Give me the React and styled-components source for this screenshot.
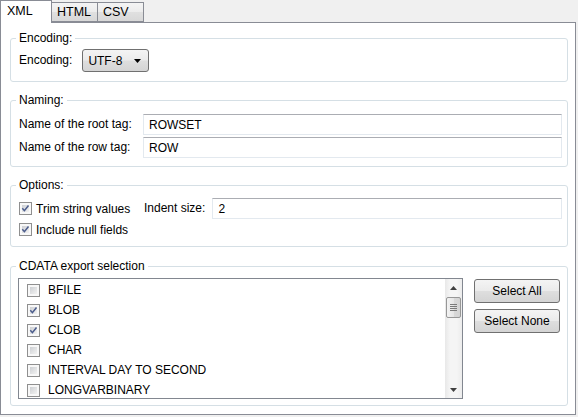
import React from 'react';
import styled, { createGlobalStyle } from 'styled-components';

const GlobalStyle = createGlobalStyle`
  html, body {
    margin: 0;
    padding: 0;
    background: #f0f0f0;
  }
  body {
    font-family: "Liberation Sans", Arial, sans-serif;
    font-size: 12px;
    color: #000;
  }
`;

const tabs = ['XML', 'HTML', 'CSV'];

const cdataTypes = [
  { name: 'BFILE', checked: false },
  { name: 'BLOB', checked: true },
  { name: 'CLOB', checked: true },
  { name: 'CHAR', checked: false },
  { name: 'INTERVAL DAY TO SECOND', checked: false },
  { name: 'LONGVARBINARY', checked: false },
];

const CheckBox = ({ checked }) => (
  <Box>
    {checked && (
      <CheckMark width="13" height="13" viewBox="0 0 13 13">
        <path d="M3.3 6.3 L5.4 8.7 L9.5 3.5" fill="none" stroke="#4b5c8c" strokeWidth="1.5" />
      </CheckMark>
    )}
  </Box>
);

const App = () => {
  return (
    <Window>
      <GlobalStyle />
      <TabStrip>
        {tabs.map((t, i) => (
          <Tab key={t} active={i === 0} wide={i === 0}>
            {t}
          </Tab>
        ))}
      </TabStrip>
      <Panel>
        <Group>
          <Legend>Encoding:</Legend>
          <EncodingBody>
            <Label>Encoding:</Label>
            <Combo>
              UTF-8
              <svg width="7" height="4" viewBox="0 0 7 4">
                <path d="M0 0 H7 L3.5 4 Z" fill="#000" />
              </svg>
            </Combo>
          </EncodingBody>
        </Group>

        <Group>
          <Legend>Naming:</Legend>
          <FormGrid>
            <Label>Name of the root tag:</Label>
            <TextBox>ROWSET</TextBox>
            <Label>Name of the row tag:</Label>
            <TextBox>ROW</TextBox>
          </FormGrid>
        </Group>

        <Group>
          <Legend>Options:</Legend>
          <OptionsGrid>
            <CheckRow>
              <CheckBox checked />
              Trim string values
            </CheckRow>
            <Label>Indent size:</Label>
            <TextBox>2</TextBox>
            <CheckRow>
              <CheckBox checked />
              Include null fields
            </CheckRow>
          </OptionsGrid>
        </Group>

        <CdataGroup>
          <Legend>CDATA export selection</Legend>
          <CdataBody>
            <ListBox>
              <Items>
                {cdataTypes.map((c) => (
                  <Item key={c.name}>
                    <CheckBox checked={c.checked} />
                    {c.name}
                  </Item>
                ))}
              </Items>
              <ScrollBar>
                <ArrowButton>
                  <svg width="7" height="4" viewBox="0 0 7 4">
                    <path d="M0 4 H7 L3.5 0 Z" fill="#404040" />
                  </svg>
                </ArrowButton>
                <Thumb>
                  <Grip />
                  <Grip />
                  <Grip />
                  <Grip />
                </Thumb>
                <Track />
                <ArrowButton>
                  <svg width="7" height="4" viewBox="0 0 7 4">
                    <path d="M0 0 H7 L3.5 4 Z" fill="#404040" />
                  </svg>
                </ArrowButton>
              </ScrollBar>
            </ListBox>
            <Buttons>
              <Button>Select All</Button>
              <Button>Select None</Button>
            </Buttons>
          </CdataBody>
        </CdataGroup>
      </Panel>
    </Window>
  );
};

const Window = styled.div`
  width: 578px;
  height: 417px;
  background: #f0f0f0;
  display: flex;
  flex-direction: column;
`;

const TabStrip = styled.div`
  display: flex;
  align-items: flex-end;
  height: 22px;
`;

const Tab = styled.div`
  position: relative;
  box-sizing: border-box;
  width: ${({ wide }) => (wide ? '52px' : '47px')};
  height: ${({ active }) => (active ? '23px' : '20px')};
  margin-left: ${({ active }) => (active ? '0' : '-1px')};
  margin-bottom: ${({ active }) => (active ? '-1px' : '0')};
  z-index: ${({ active }) => (active ? 2 : 1)};
  border: 1px solid #898c95;
  border-bottom: ${({ active }) => (active ? 'none' : '1px solid #898c95')};
  background: ${({ active }) =>
    active ? '#fff' : 'linear-gradient(#f4f4f4, #ececec 50%, #e0e0e0 51%, #d8d8d8)'};
  display: flex;
  align-items: center;
  padding-left: ${({ active }) => (active ? '6px' : '5px')};
  padding-bottom: ${({ active }) => (active ? '2px' : '0')};
  font-size: 12.5px;
`;

const Panel = styled.div`
  box-sizing: border-box;
  width: 576px;
  height: 393px;
  background: #fff;
  border: 1px solid #898c95;
  padding: 8px 7px 0 9px;
  display: flex;
  flex-direction: column;
  gap: 11px;
`;

const Group = styled.fieldset`
  margin: 0;
  padding: 0;
  min-width: 0;
  border: 1px solid #d5dfe5;
  border-radius: 3px;
`;

const CdataGroup = styled(Group)`
  margin-top: 1px;
`;

const Legend = styled.legend`
  margin-left: 5px;
  padding: 0 3px;
  line-height: 15px;
  font-size: 12px;
`;

const Label = styled.span`
  white-space: nowrap;
  line-height: 15px;
`;

const EncodingBody = styled.div`
  display: flex;
  align-items: center;
  gap: 10px;
  padding: 3px 8px 9px;
`;

const Combo = styled.div`
  box-sizing: border-box;
  width: 67px;
  height: 23px;
  border: 1px solid #707070;
  border-radius: 3px;
  background: linear-gradient(#f4f4f4, #ebebeb 48%, #dedede 52%, #d4d4d4);
  display: flex;
  align-items: center;
  justify-content: space-between;
  padding: 0 7px 0 5px;
`;

const FormGrid = styled.div`
  display: grid;
  grid-template-columns: 124px 1fr;
  align-items: center;
  row-gap: 2px;
  padding: 6px 5px 8px 8px;
`;

const OptionsGrid = styled.div`
  display: grid;
  grid-template-columns: 118px auto 1fr;
  align-items: center;
  column-gap: 7px;
  row-gap: 0;
  padding: 5px 5px 6px 8px;
`;

const TextBox = styled.div`
  box-sizing: border-box;
  height: 21px;
  border: 1px solid #e3e9ef;
  border-top-color: #abadb3;
  background: #fff;
  display: flex;
  align-items: center;
  padding-left: 5px;
`;

const CheckRow = styled.label`
  display: flex;
  align-items: center;
  gap: 4px;
  height: 21px;
  white-space: nowrap;
`;

const Box = styled.span`
  position: relative;
  flex: none;
  box-sizing: border-box;
  width: 13px;
  height: 13px;
  border: 1px solid #8f8f8f;
  padding: 2px;
  background: linear-gradient(135deg, #cdcfd3, #f2f2f2) content-box, #f8f8f8;
`;

const CheckMark = styled.svg`
  position: absolute;
  left: -1px;
  top: -1px;
`;

const CdataBody = styled.div`
  display: flex;
  gap: 11px;
  padding: 4px 7px 6px 7px;
`;

const ListBox = styled.div`
  box-sizing: border-box;
  width: 445px;
  height: 121px;
  border: 1px solid #828790;
  display: flex;
  overflow: hidden;
`;

const Items = styled.div`
  flex: 1;
  padding: 1px 0 0 8px;
  overflow: hidden;
`;

const Item = styled.div`
  display: flex;
  align-items: center;
  gap: 8px;
  height: 20px;
  white-space: nowrap;
`;

const ScrollBar = styled.div`
  width: 17px;
  display: flex;
  flex-direction: column;
  background: linear-gradient(to right, #e8e8e8, #f5f5f5 30%, #f5f5f5 70%, #ececec);
`;

const ArrowButton = styled.div`
  height: 17px;
  display: flex;
  align-items: center;
  justify-content: center;
`;

const Thumb = styled.div`
  box-sizing: border-box;
  height: 21px;
  margin: 1px 1px 0;
  border: 1px solid #979797;
  border-radius: 2px;
  background: linear-gradient(to right, #f3f3f3, #e6e6e6 50%, #d9d9d9 51%, #d4d4d4);
  display: flex;
  flex-direction: column;
  align-items: center;
  justify-content: center;
  gap: 1px;
`;

const Grip = styled.div`
  width: 7px;
  height: 1px;
  background: #7a7a7a;
`;

const Track = styled.div`
  flex: 1;
`;

const Buttons = styled.div`
  display: flex;
  flex-direction: column;
  gap: 6px;
  padding-top: 1px;
`;

const Button = styled.button`
  box-sizing: border-box;
  width: 86px;
  height: 24px;
  border: 1px solid #707070;
  border-radius: 3px;
  background: linear-gradient(#f4f4f4, #ebebeb 48%, #dedede 52%, #d4d4d4);
  font-family: "Liberation Sans", Arial, sans-serif;
  font-size: 12px;
  color: #000;
  padding: 0;
`;

export default App;
